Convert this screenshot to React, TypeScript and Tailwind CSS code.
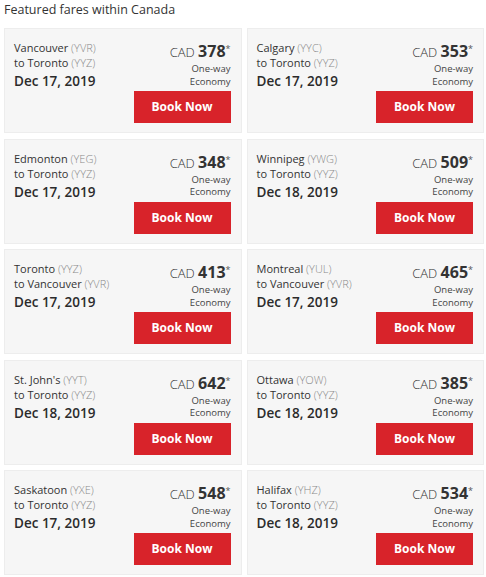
const fares = [
  { from: "Vancouver", fromCode: "YVR", to: "Toronto", toCode: "YYZ", date: "Dec 17, 2019", price: 378 },
  { from: "Calgary", fromCode: "YYC", to: "Toronto", toCode: "YYZ", date: "Dec 17, 2019", price: 353 },
  { from: "Edmonton", fromCode: "YEG", to: "Toronto", toCode: "YYZ", date: "Dec 17, 2019", price: 348 },
  { from: "Winnipeg", fromCode: "YWG", to: "Toronto", toCode: "YYZ", date: "Dec 18, 2019", price: 509 },
  { from: "Toronto", fromCode: "YYZ", to: "Vancouver", toCode: "YVR", date: "Dec 17, 2019", price: 413 },
  { from: "Montreal", fromCode: "YUL", to: "Vancouver", toCode: "YVR", date: "Dec 17, 2019", price: 465 },
  { from: "St. John's", fromCode: "YYT", to: "Toronto", toCode: "YYZ", date: "Dec 18, 2019", price: 642 },
  { from: "Ottawa", fromCode: "YOW", to: "Toronto", toCode: "YYZ", date: "Dec 18, 2019", price: 385 },
  { from: "Saskatoon", fromCode: "YXE", to: "Toronto", toCode: "YYZ", date: "Dec 17, 2019", price: 548 },
  { from: "Halifax", fromCode: "YHZ", to: "Toronto", toCode: "YYZ", date: "Dec 18, 2019", price: 534 },
];

function FareCard({ fare }: any) {
  return (
    <div className="h-[105px] bg-[#f6f6f6] border border-[#ededed] flex justify-between pl-[9px] pr-[10px] pt-[11px]">
      <div className="flex flex-col">
        <span className="text-[11px] leading-[15px] text-[#333]">
          {fare.from} <span className="text-[#8a8a8a] font-light">({fare.fromCode})</span>
        </span>
        <span className="text-[11px] leading-[15px] text-[#333]">
          to {fare.to} <span className="text-[#8a8a8a] font-light">({fare.toCode})</span>
        </span>
        <span className="mt-[2px] text-[13.5px] leading-[18px] font-semibold text-[#2b2b2b]">{fare.date}</span>
      </div>
      <div className="flex flex-col items-end">
        <div className="leading-[22px] text-[#333] whitespace-nowrap">
          <span className="text-[13px] font-light">CAD </span>
          <span className="text-[16px] font-bold">{fare.price}</span>
          <span className="text-[9px] align-top relative -top-[2px] text-[#555]">*</span>
        </div>
        <span className="text-[9.5px] leading-[12.5px] text-[#444]">One-way</span>
        <span className="text-[9.5px] leading-[12.5px] text-[#444]">Economy</span>
        <button className="mt-[3px] w-[97px] h-[32px] bg-[#d8232a] text-white text-[12px] font-bold">
          Book Now
        </button>
      </div>
    </div>
  );
}

export default function App() {
  return (
    <div className="w-[486px] h-[577px] bg-white pl-[4px] pr-[2px] font-['Open_Sans',sans-serif]">
      <h2 className="text-[12.5px] leading-[20px] text-[#333] h-[28px]">Featured fares within Canada</h2>
      <div className="grid grid-cols-2 gap-x-[5px] gap-y-[5.5px]">
        {fares.map((f) => (
          <FareCard key={f.from + f.to} fare={f} />
        ))}
      </div>
    </div>
  );
}
